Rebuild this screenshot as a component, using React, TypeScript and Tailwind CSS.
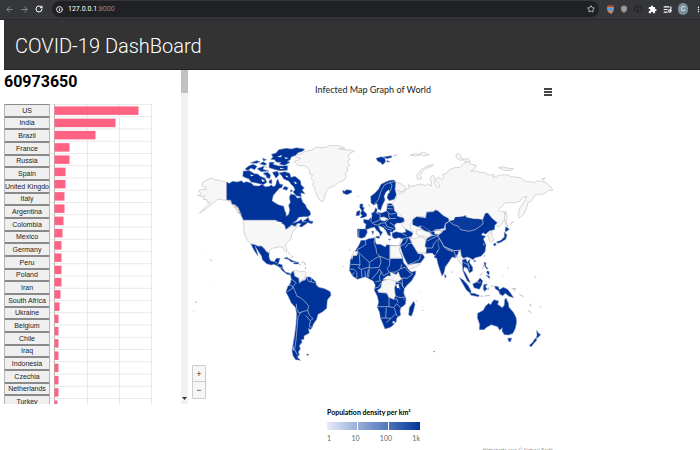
import { ArrowLeft, ArrowRight, Info, RotateCw, Star, Shield, ListMusic } from "lucide-react";
import { MdExtension, MdMoreVert } from "react-icons/md";

const cases: [string, number][] = [
  ["US", 84], ["India", 61], ["Brazil", 41], ["France", 15], ["Russia", 15], ["Spain", 11],
  ["United Kingdom", 11], ["Italy", 10], ["Argentina", 10], ["Colombia", 9], ["Mexico", 8],
  ["Germany", 7], ["Peru", 7], ["Poland", 7], ["Iran", 7], ["South Africa", 6], ["Ukraine", 5],
  ["Belgium", 4], ["Chile", 4], ["Iraq", 4], ["Indonesia", 4], ["Czechia", 4],
  ["Netherlands", 4], ["Turkey", 4],
];
const barLengths = [...cases.map(([, n]) => n), 3];

function BrowserBar() {
  return (
    <div className="flex h-5 items-center gap-1 border-b border-[#292a2d] bg-[#35363a] pb-px pl-1 text-[#9aa0a6]">
      <button aria-label="Back" className="px-px"><ArrowLeft size={9} /></button>
      <button aria-label="Forward" className="px-px"><ArrowRight size={9} /></button>
      <button aria-label="Reload" className="px-px text-white"><RotateCw size={8} strokeWidth={3} /></button>
      <label className="ml-1 mr-1 flex h-4 flex-1 items-center gap-1 rounded-full bg-[#202124] px-1 text-white">
        <Info size={7} strokeWidth={3} />
        <span className="pl-px font-['Roboto',sans-serif] text-[7px] leading-3">
          127.0.0.1<span className="text-[#8a8d91]">:8000</span>
        </span>
        <span className="flex-1" />
        <Star size={8} />
      </label>
      <div className="flex items-center gap-[6px] pr-px text-white">
        <svg width="7" height="10" viewBox="0 0 7 10">
          <path d="M1 1h5l1 3-1 4-2 2-3-2-1-4z" fill="#c98262" />
          <path d="M0 4h7v2L5 7 3.5 6 2 7 0 6z" fill="#4b9ee8" />
          <path d="M1 1h5v2H1z" fill="#a04a2c" />
        </svg>
        <Shield size={8} fill="#9b9b9b" color="#9b9b9b" />
        <svg width="8" height="8" viewBox="0 0 8 8" fill="none" stroke="#202124">
          <path d="M4 0v8L1 5H0V3h1zM6 1l2 3-2 3" />
        </svg>
        <MdExtension size={9} />
        <ListMusic size={9} strokeWidth={3} />
        <span className="flex h-3 w-[10px] items-center justify-center rounded-full bg-[#78909c] text-[7px] font-['Roboto',sans-serif]">C</span>
        <MdMoreVert size={9} className="-mr-1" />
      </div>
    </div>
  );
}

function CaseChart() {
  return (
    <svg className="h-[308px] w-[102px]" viewBox="0 0 102 308" role="img" aria-label="Cases by country">
      <g stroke="#e9e9e9">
        {barLengths.map((_, i) => (
          <path key={i} d={`M0 ${0.5 + i * 12.25}H102`} />
        ))}
        <path d="M37.5 0V308M69.5 0V308M101.5 0V308" />
      </g>
      <path d="M4.500 0V308" stroke="#bbb" />
      {barLengths.map((n, i) => (
        <rect key={i} x="4.500" y={2.4 + i * 12.25} width={n} height="8.500" fill="#ff6384" />
      ))}
    </svg>
  );
}

function Sidebar() {
  return (
    <aside className="flex h-[334px] w-[188px] shrink-0 overflow-hidden">
      <div className="min-w-0 flex-1 pl-1">
        <h2 className="h-[34px] font-['Roboto',sans-serif] text-[16px] font-bold leading-6 text-black">60973650</h2>
        <div className="flex items-start">
          <div className="grid h-[304px] w-[46px] auto-rows-fr">
            {cases.map(([name]) => (
              <button
                key={name}
                className="flex min-h-0 items-center justify-center-safe overflow-hidden whitespace-nowrap rounded-[1px] border border-[#8a8a8a] border-x-[#b5b5b5] bg-[#efefef] font-['Liberation_Sans',Arial,sans-serif] text-[7px] leading-none text-[#222]"
              >
                {name}
              </button>
            ))}
          </div>
          <CaseChart />
        </div>
      </div>
      <div className="flex w-[7px] flex-col items-center justify-between bg-[#f1f1f1]">
        <div className="h-[23px] w-full bg-[#c1c1c1]" />
        <svg className="mb-1" width="5" height="3" viewBox="0 0 5 3"><path d="M0 0h5L2.500 3z" fill="#333" /></svg>
      </div>
    </aside>
  );
}

const emptyLand = [
  // Alaska
  "M110 141L97 139L85 135L74 134L64 129L55 133L40 140L35 150L40 156L50 157L47 164L36 163L25 168L34 175L32 181L22 180L36 185L44 182L40 193L50 194L52 202L62 203L50 213L38 224L28 235L45 224L62 211L75 200L84 192L98 195L110 195L122 203L130 213L138 222L145 236L140 224L132 208L125 198L110 193Z",
  // United States
  "M160 255H250L262 260L278 264L288 272L285 283L296 279L308 275L322 272L318 280L309 288L305 300L303 311L290 324L285 332L291 345L289 353L283 347L279 337L268 335L258 338L245 340L239 349L237 356L229 346L220 338L206 333L184 328L174 318L167 307L161 290L162 270Z",
  // Greenland
  "M312 79L324 76L333 70L318 68L316 61L333 57L345 49L365 45L378 37L405 38L418 32L445 32L465 39L445 42L480 45L493 49L480 54L474 64L479 72L472 82L480 90L470 97L474 108L465 114L469 126L460 137L445 142L435 152L420 158L411 165L406 178L402 193L397 200L389 195L382 184L376 170L374 158L367 149L372 139L363 130L368 121L359 118L360 108L352 97L341 92L325 92Z",
  // Russia
  "M612 141L622 142L635 148L647 157L645 167L632 170L622 165L627 176L638 173L647 163L658 159L654 149L664 154L678 151L692 147L706 152L713 147L724 153L725 143L720 129L728 120L734 126L735 145L742 158L750 154L744 143L737 135L746 126L755 133L762 128L758 119L770 115L778 104L794 98L810 97L822 85L834 79L841 87L860 92L853 101L842 109L860 108L870 113L884 112L898 121L913 118L910 128L928 120L948 119L965 125L991 128L1006 139L1034 142L1044 137L1066 142L1082 155L1088 166L1076 166L1068 172L1061 177L1042 178L1032 184L1025 198L1014 202L1009 222L1002 236L988 250L985 232L992 215L1006 195L1011 184L997 189L990 198L976 203L958 202L944 205L936 214L925 224L934 231L942 229L948 246L938 263L925 277L915 266L907 250L895 235L884 238L878 255L850 252L820 245L803 248L790 257L778 258L762 243L745 228L711 230L708 243L672 247L671 258L660 267L662 281L671 291L660 291L642 280L635 269L642 261L640 250L625 235L612 228L606 213L611 199L620 190L615 173Z",
  // Novaya Zemlya and Arctic islands
  "M683 133L680 120L692 105L710 93L730 88L726 94L708 100L697 110L690 121L696 131Z",
  "M797 60L806 55L815 63L810 68L820 72L812 77L802 70Z M818 73L834 71L842 80L825 81Z M925 98L937 95L955 100L970 101L961 107L942 105Z M660 60L678 55L690 60L675 63Z M688 57L700 51L708 56L718 59L701 63Z M1055 131L1065 129L1060 136Z",
  // Sakhalin and Korea
  "M947 229L951 245L949 260L954 276L946 268L943 248Z M893 297L906 288L905 303L912 315L902 322L895 309Z",
  // Turkmenistan, Iran, Caucasus, Levant
  "M679 284L692 284L702 280L722 298L713 309L700 303L687 304L678 297Z",
  "M660 304L674 311L690 305L704 310L708 321L705 334L713 347L711 355L696 354L679 349L667 334Z",
  "M632 313L642 313L640 323L628 331Z",
  // Venezuela
  "M311 409L319 405L326 410L343 409L350 415L344 425L345 432L334 436L328 446L326 430L314 424Z",
  // Yemen and Oman fringe
  "M646 392L661 390L671 386L684 382L690 388L672 398L653 404Z",
  // Myanmar
  "M800 352L809 343L815 357L812 368L819 376L820 394L813 387L805 377Z",
];

const land = [
  // Canada mainland
  "M110 141L118 145L128 139L142 141L155 137L160 143L170 140L183 144L192 152L207 153L216 148L226 155L239 154L243 149L250 155L257 151L260 137L264 132L269 147L279 149L275 158L268 160L258 172L250 181L246 197L256 204L265 209L281 214L284 226L288 235L289 244L296 238L299 225L296 211L301 202L298 187L302 177L315 180L322 190L333 187L338 201L347 210L350 219L360 229L362 239L354 245L340 245L326 247L320 256L308 265L325 259L334 253L338 261L350 260L354 247L360 259L369 259L367 265L355 260L351 265L335 276L327 274L334 266L323 265L316 274L305 270L288 283L283 269L268 262L257 255H160L154 242L149 235L146 222L137 211L126 207L122 195L110 195Z",
  // Canadian Arctic islands
  "M244 58L258 54L266 44L288 40L305 42L319 38L344 42L338 49L324 53L317 61L304 66L300 75L292 79L300 82L284 91L268 88L273 82L260 82L253 74L242 73L249 66Z",
  "M238 82L253 82L249 88L267 93L293 92L292 106L270 107L257 104L237 98Z",
  "M165 102L177 92L190 88L201 94L194 104L182 99L174 107Z M181 84L199 77L210 79L201 85Z M209 87L219 80L231 87L224 91Z M201 101L223 93L219 103L237 108L214 110Z M217 70L230 74L221 78Z",
  "M158 124L160 108L179 107L193 116L203 117L211 124L225 130L231 142L220 149L199 144L183 141L177 132L167 128Z",
  "M220 114L234 112L242 121L239 131L226 126Z M237 137L245 133L246 146L237 144Z M247 112L263 109L267 119L258 130Z",
  "M267 114L284 110L299 115L303 127L315 124L326 133L332 138L333 149L343 159L336 165L345 176L332 174L334 185L319 182L309 171L315 164L311 155L303 148L297 139L281 132L275 122Z",
  "M278 162L284 154L295 158L290 166Z M302 163L308 168L302 172Z M338 259L354 248L358 258L369 260L365 266L350 261Z",
  // Mexico and Central America
  "M183 327L194 329L204 334L214 333L223 341L229 350L237 354L237 366L241 377L253 380L259 370L270 370L265 386L276 389L279 402L287 412L298 414L302 420L291 418L277 407L268 396L252 388L243 390L230 386L217 374L215 364L207 352L195 333L202 354L204 363L196 352L188 338Z",
  "M281 370L290 367L305 376L319 380L304 381L294 373Z M310 383L325 381L326 387L312 387Z",
  // South America
  "M301 418L310 407L314 424L326 430L328 445L336 438L346 435L350 425L362 427L377 440L379 450L386 457L404 461L421 470L423 481L412 495L410 520L397 531L384 538L380 553L370 567L367 577L361 584L355 580L358 594L342 603L342 613L334 614L336 622L328 632L331 642L325 651L328 658L322 667L332 676L317 674L309 662L306 648L309 629L314 600L318 568L320 535L316 517L304 504L296 487L288 471L293 455L301 445L304 432Z",
  "M350 657L357 658L352 662Z",
  // Iceland and Svalbard
  "M457 166L465 169L469 164L484 166L486 172L471 179L460 175Z",
  "M558 70L574 65L584 69L587 80L578 89L571 82L563 79Z M580 66L604 62L606 67L591 71Z M591 76L599 80L592 82Z",
  // Scandinavia and Finland
  "M542 184L555 174L566 162L573 148L587 141L600 136L613 135L617 144L615 163L619 179L613 193L598 197L591 189L594 177L600 171L596 164L588 171L582 184L585 195L577 211L572 226L564 222L561 205L551 210L543 204Z",
  // British Isles
  "M510 207L519 207L518 216L523 218L520 227L530 236L530 244L519 248L510 249L516 241L511 235L515 227L509 217Z M500 230L510 226L509 241L498 243Z",
  // Continental Europe
  "M521 253L535 255L546 245L545 234L552 231L557 218L562 224L559 232L575 234L590 228L592 207L603 205L611 214L613 227L621 235L622 244L641 249L643 259L633 264L620 264L613 271L617 283L610 287L608 292L600 290L602 303L594 300L588 287L579 277L565 272L571 287L578 291L571 304L568 293L558 284L554 276L542 279L530 284L532 292L525 306L514 310L503 306L502 282L526 282L528 267L521 263Z M558 304L569 304L567 311L557 307Z M545 289L551 288L549 299Z M595 313L603 313L598 316Z",
  // Turkey and Caucasus
  "M606 295L618 290L635 294L648 291L646 282L660 289L669 295L665 304L656 306L638 311L626 308L614 311L607 306Z",
  // Iraq, Syria, Arabia
  "M640 312L657 307L665 325L675 341L684 356L698 358L704 367L692 383L677 385L654 389L648 379L640 362L633 342L630 332Z",
  // Kazakhstan
  "M668 254L680 245L707 249L710 232L732 230L735 225L743 227L760 242L775 250L777 259L766 265L763 280L748 283L738 283L725 291L709 282L690 272L685 276L668 269Z",
  "M688 276L698 274L711 282L724 292L740 284L755 288L742 302L726 299L719 291L703 287L696 283Z",
  // Pakistan and Afghanistan
  "M710 311L724 302L740 301L752 309L745 326L748 340L740 351L743 357L733 361L727 354L708 355L710 339L705 333Z",
  // India
  "M748 310L758 318L760 332L778 344L793 348L807 344L804 356L800 361L798 368L786 366L775 383L766 395L762 413L756 423L749 403L744 387L740 370L732 367L737 359L742 352L748 340L744 326Z M764 417L769 424L765 430Z",
  // China and Mongolia
  "M777 259L792 256L796 247L820 245L826 241L830 249L850 252L865 252L878 255L886 235L893 234L905 249L922 263L915 270L913 284L899 287L886 298L879 293L874 300L887 304L880 312L888 330L885 350L873 364L855 368L849 374L840 369L831 366L820 370L814 362L812 346L792 347L776 342L761 334L755 320L748 310L743 303L755 289L767 284L766 266Z",
  "M851 377L857 376L854 382Z",
  // Indochina and Malaysia
  "M817 375L828 371L831 380L841 373L838 382L848 397L848 408L838 414L833 401L823 395L820 405L828 416L837 434L841 443L832 438L824 421L818 404Z",
  // Indonesia, Philippines
  "M808 428L820 435L834 451L843 468L843 476L829 465L820 449Z M839 475L852 475L868 481L866 485L843 481Z M848 447L862 440L870 429L878 437L875 450L868 463L852 458Z M881 449L892 447L886 455L893 463L887 464L884 470L880 462Z",
  "M882 382L888 383L887 394L895 401L889 401L884 393Z M891 407L898 410L897 420L890 414Z M888 420L899 424L898 431Z",
  "M914 453L925 455L928 464L940 457L953 463L962 475L971 488L957 484L946 475L938 482L929 477L927 469L916 461Z",
  // Japan
  "M947 275L958 282L952 288L945 290Z M943 291L951 300L947 313L934 321L924 325L919 321L933 316L943 306Z M914 324L919 327L914 334L910 328Z",
  // Australia, Tasmania, New Zealand
  "M863 535L880 526L886 514L896 505L902 509L907 500L912 494L926 498L923 508L937 518L943 510L944 494L948 489L955 504L957 517L970 532L978 547L980 561L976 580L969 595L956 600L943 599L936 588L937 578L929 586L923 575L904 569L890 577L882 584L868 584L869 568L862 548Z",
  "M953 610L965 609L962 619L957 621Z M1040 586L1045 594L1052 599L1045 607L1037 612L1041 602Z M1036 609L1041 615L1030 627L1023 636L1018 631L1028 622Z",
  // Africa
  "M513 316L526 316L536 311L555 308L556 321L560 328L571 328L586 336L590 329L604 331L631 333L628 344L638 368L640 382L650 395L657 406L665 411L678 408L676 418L665 437L651 451L643 461L641 474L648 492L646 508L632 519L630 529L632 540L620 549L619 559L609 571L601 577L585 582L578 565L571 548L569 533L562 517L566 501L562 484L553 466L556 451L550 438L538 432L526 425L502 433L488 423L478 406L480 391L481 374L489 358L499 343L507 330Z",
  "M671 499L675 508L670 529L664 544L656 540L658 518Z",
  "M732 648L735 650L731 651Z",
];

const emptyInland = [
  "M600 332L631 333L628 344L637 370H600Z",
  "M579 433L592 423L603 423L600 412L619 419L625 411L629 423L635 432L623 440L605 437L595 435Z",
  "M576 439L592 433L616 437L617 448L613 459L616 482L611 493L597 487L591 474L570 472L562 467L573 458Z",
  "M484 365L492 348L503 350L501 361L489 362L486 373Z",
  "M570 248L582 246L594 252L583 258L573 256Z",
  "M733 288L746 286L758 290L747 298L735 297Z",
  "M608 562a3 3 0 1 0 6 0a3 3 0 1 0-6 0Z",
];

const borders = [
  // Africa
  "M526 316L528 328L515 337L503 343V350M503 350L512 358L538 382L558 369L570 364M555 308L552 323L558 340L560 355L570 364L600 376V332M508 358L510 389L482 388M510 389L505 399L514 403L538 396V382M570 364L573 382L567 397L544 399L538 396M600 376L598 393L591 400L598 412L581 422L574 411L568 402M514 403L516 427M525 407L526 425M535 403L531 427M478 402L492 403L501 413L500 430M492 412L487 421M538 396L536 427M568 402L562 414L553 423L546 432M574 411L568 426L571 438L556 440M553 460L566 456L572 444M600 370H637M600 412L618 411L632 401L635 388M632 401L645 397L657 411L668 417L651 430L636 429M636 429L638 456M617 443L632 443L643 461M616 451L626 453L630 463M615 482L630 488L646 486M563 472L590 474L597 489L597 515L562 515M597 515L611 518L620 506L632 519M611 493L620 491L624 503M589 518L587 549L573 549M587 549L603 550L618 536L613 519M618 536L626 548M603 550L588 563",
  // South America
  "M304 432L319 444L309 454L314 466M293 452L303 450L309 459L292 470M314 466L321 484L332 488L348 503L356 513L353 526L334 531L327 534L320 521L319 506M334 531L324 545L321 580L318 615L314 644L323 661M353 526L358 540L369 551L361 557L347 541M361 557L358 576L369 576M350 425L355 439L374 443M364 429L363 441",
  // Europe
  "M553 207L565 194L574 166L584 149L600 143L606 151L601 168M600 143L613 140M592 220L608 222M590 228L601 238L617 235M590 212L609 212M545 246L542 258L549 267M557 233L571 239L569 255L549 264M595 234L598 251L618 250M598 251L586 263L568 266M600 263L612 271M586 263L591 275L612 281M580 272L592 283L605 285M551 268L562 270L571 269M507 283L506 306M527 282L534 286",
  // Asia
  "M777 259L790 269L804 273L812 284L837 289L858 283L879 267L878 255M777 259L766 268L763 280L755 290M755 290L743 303L748 310L761 334L792 347L813 345M743 303L727 310L712 318M748 310L732 325L727 339L709 339M761 334L768 342L790 351M793 350L797 366M655 309L646 326L632 333M666 325L655 326L646 338M655 389L672 382L688 374L692 361M637 296L650 302M710 310L730 300M688 276L709 291M830 375L839 396M820 382L833 389L839 405M859 440L867 444L873 441",
  // Central America
  "M255 382L262 384M266 386L260 391M278 399L270 397",
];

// Small Pacific, Caribbean and Atlantic islands
const specks =
  "M61 373l6 6M48 342v1M60 444h1M15 500l6 3M9 529h2M295 352l5 6M303 362l6 4M343 383l4 7M347 396l-1 7M328 389l5 1M335 380l8 3M477 345h4M457 395h4M502 185l4-2M536 208l3 7M880 325l2 6M884 360l-2 7M881 390l-3 11M878 413l-9 10M871 483l9 1M884 483l15-2M895 466l2-9M903 452l7 2M938 423h2M953 398l4 3M965 462l12-2l-5 8M988 478l12 7M1020 506l3 9M1014 526l10 7M1049 518l5-3M1033 426h6M692 470l2-2M697 526h4M677 498h4M786 414l2-5M961 268l10-8M640 492l3 1M205 81l9 5M231 98l-8-4M142 214l6 14l6 12M132 207l7 12M308 630l4 18M611 62l10-2";

function WorldMap() {
  return (
    <svg className="w-full" viewBox="0 0 1110 705" role="img" aria-label="World map" strokeLinejoin="round">
      <g fill="#f7f7f7" stroke="#cccccc" strokeWidth="2.500">
        {emptyLand.map((d) => <path key={d} d={d} />)}
      </g>
      <g fill="#003399" stroke="#7f93c0" strokeWidth="1.500">
        {land.map((d) => <path key={d} d={d} />)}
      </g>
      <path fill="#0a3b9c" d="M778 259L792 256L796 247L820 245L850 252L878 255L875 267L858 283L837 289L812 284L804 273L790 269Z" />
      <g fill="#f7f7f7" stroke="#cccccc" strokeWidth="2">
        {emptyInland.map((d) => <path key={d} d={d} />)}
      </g>
      <g fill="none" stroke="#c4cad6" strokeWidth="2">
        {borders.map((d) => <path key={d} d={d} />)}
      </g>
      <path
        fill="#fff"
        d="M222 117l9 7l-6 3zM180 118l12 4l-8 2zM262 65l15-5l-5 7zM284 67l12 2l-10 3zM214 131l12 8l-9 1zM287 120l9 7l-8-1zM270 98l14 3l-13 1zM312 139l10 6l-7 2zM256 262l14-2l8 4l-12 6zM619 448l7-1l1 11l-6 2z"
      />
      <path d={specks} fill="none" stroke="#b8bcc5" strokeWidth="3" />
    </svg>
  );
}

function DensityLegend() {
  return (
    <div className="ml-[137px] mt-9 w-[93px]">
      <p className="whitespace-nowrap text-[7px] font-bold leading-3 text-black">Population density per km²</p>
      <div className="mt-1 grid h-2 grid-cols-3 divide-x divide-white bg-linear-to-r from-[#e6ebf5] to-[#003399]">
        <span /><span /><span />
      </div>
      <div className="mt-1 flex justify-between text-[7px] leading-2 text-[#666]">
        <span>1</span><span>10</span><span>100</span><span>1k</span>
      </div>
    </div>
  );
}

function MapPanel() {
  return (
    <main className="ml-[2px] w-[370px] shrink-0 font-['Lato',sans-serif]">
      <div className="flex h-[65px] items-start pt-3">
        <h3 className="flex-1 pl-3 text-center text-[9px] leading-4 text-[#222]">Infected Map Graph of World</h3>
        <button aria-label="Chart menu" className="mr-2 mt-[6px] flex w-2 flex-col gap-px">
          <span className="h-[2px] bg-[#444]" /><span className="h-[2px] bg-[#444]" /><span className="h-[2px] bg-[#444]" />
        </button>
      </div>
      <div className="relative">
        <WorldMap />
        <div className="absolute left-[2px] top-[230px] flex w-[14px] flex-col divide-y divide-[#ccc] rounded-[1px] border border-[#ccc] bg-[#f7f7f7] font-['Liberation_Sans',sans-serif] text-[9px] text-[#333]">
          <button aria-label="Zoom in" className="h-4 leading-4">+</button>
          <button aria-label="Zoom out" className="h-4 leading-4">−</button>
        </div>
      </div>
      <DensityLegend />
      <p className="mr-[7px] mt-1 text-right text-[5px] leading-2 text-[#999]">Highcharts.com © Natural Earth</p>
    </main>
  );
}

export default function App() {
  return (
    <div className="flex h-screen flex-col overflow-hidden bg-white">
      <BrowserBar />
      <header className="ml-1 h-[50px] shrink-0 border-b border-[#222] bg-[#333] pl-[11px]">
        <h1 className="font-['Roboto',sans-serif] text-[20px] font-light leading-[52px] text-white">COVID-19 DashBoard</h1>
      </header>
      <div className="flex min-h-0 flex-1 items-start">
        <Sidebar />
        <MapPanel />
      </div>
    </div>
  );
}
